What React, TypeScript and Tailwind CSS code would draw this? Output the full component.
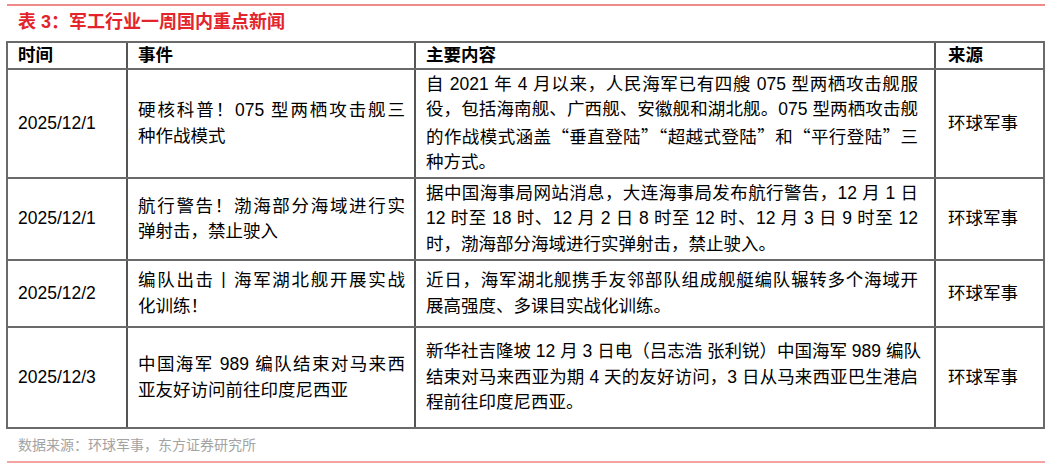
import React from "react";

const FONT = '"Liberation Sans", "Noto Sans CJK SC", sans-serif';
const CJK = '"Noto Sans CJK SC", sans-serif';

function Q({ children }: { children: React.ReactNode }) {
  return <span style={{ fontFamily: CJK }}>{children}</span>;
}

function Lines({ lines }: { lines: React.ReactNode[] }) {
  return (
    <div className="flex flex-col">
      {lines.map((l, i) => (
        <div
          key={i}
          className={
            i < lines.length - 1
              ? "whitespace-nowrap text-justify [text-align-last:justify]"
              : "whitespace-nowrap"
          }
        >
          {l}
        </div>
      ))}
    </div>
  );
}

type Row = {
  h: string;
  date: string;
  event: React.ReactNode[];
  content: React.ReactNode[];
  src: string;
};

const rows: Row[] = [
  {
    h: "h-[109px]",
    date: "2025/12/1",
    event: ["硬核科普！075 型两栖攻击舰三", "种作战模式"],
    content: [
      "自 2021 年 4 月以来，人民海军已有四艘 075 型两栖攻击舰服",
      "役，包括海南舰、广西舰、安徽舰和湖北舰。075 型两栖攻击舰",
      <>
        的作战模式涵盖<Q>“</Q>垂直登陆<Q>”“</Q>超越式登陆<Q>”</Q>和<Q>“</Q>平行登陆<Q>”</Q>三
      </>,
      "种方式。",
    ],
    src: "环球军事",
  },
  {
    h: "h-[82px]",
    date: "2025/12/1",
    event: ["航行警告！渤海部分海域进行实", "弹射击，禁止驶入"],
    content: [
      "据中国海事局网站消息，大连海事局发布航行警告，12 月 1 日",
      "12 时至 18 时、12 月 2 日 8 时至 12 时、12 月 3 日 9 时至 12",
      "时，渤海部分海域进行实弹射击，禁止驶入。",
    ],
    src: "环球军事",
  },
  {
    h: "h-[67px]",
    date: "2025/12/2",
    event: ["编队出击丨海军湖北舰开展实战", "化训练！"],
    content: [
      "近日，海军湖北舰携手友邻部队组成舰艇编队辗转多个海域开",
      "展高强度、多课目实战化训练。",
    ],
    src: "环球军事",
  },
  {
    h: "h-[99px]",
    date: "2025/12/3",
    event: ["中国海军 989 编队结束对马来西", "亚友好访问前往印度尼西亚"],
    content: [
      "新华社吉隆坡 12 月 3 日电（吕志浩 张利锐）中国海军 989 编队",
      "结束对马来西亚为期 4 天的友好访问，3 日从马来西亚巴生港启",
      "程前往印度尼西亚。",
    ],
    src: "环球军事",
  },
];

export default function App() {
  return (
    <div
      className="w-[1051px] h-[468px] bg-white text-black overflow-hidden pt-[4px]"
      style={{ fontFamily: FONT }}
    >
      <div className="ml-[7px] w-[1038px] h-[2px] bg-[#f08a8a]" />
      <div className="h-[35px] flex items-center pb-[4px] pl-[18px] text-[18px] font-bold text-[#e3242b] leading-none">
        表 3：军工行业一周国内重点新闻
      </div>

      <div className="ml-[6px] w-[1039px] border-2 border-[#6a6a6a] text-[17.5px] leading-[25.5px]">
        {/* header */}
        <div className="flex h-[27px] border-b-2 border-[#6a6a6a] font-bold">
          <div className="w-[120px] border-r-2 border-[#555] pl-[10px] flex items-center">时间</div>
          <div className="w-[288px] border-r-2 border-[#555] pl-[10px] flex items-center">事件</div>
          <div className="w-[520px] border-r-2 border-[#555] pl-[10px] flex items-center">主要内容</div>
          <div className="flex-1 pl-[12px] flex items-center">来源</div>
        </div>
        {rows.map((r, i) => (
          <div
            key={i}
            className={`flex ${r.h} ${i < rows.length - 1 ? "border-b-2 border-[#6a6a6a]" : ""}`}
          >
            <div className="w-[120px] border-r-2 border-[#555] pl-[10px] flex items-center">
              {r.date}
            </div>
            <div className="w-[288px] border-r-2 border-[#555] pl-[10px] pr-[9px] flex items-center">
              <div className="w-[267px]">
                <Lines lines={r.event} />
              </div>
            </div>
            <div className="w-[520px] border-r-2 border-[#555] pl-[10px] flex items-center">
              <div className="w-[492px]">
                <Lines lines={r.content} />
              </div>
            </div>
            <div className="flex-1 pl-[12px] flex items-center">{r.src}</div>
          </div>
        ))}
      </div>

      <div className="h-[32px] flex items-center pl-[18px] text-[14px] text-[#a3a3a3]">
        数据来源：环球军事，东方证券研究所
      </div>
      <div className="ml-[7px] w-[1038px] h-[2px] bg-[#f5a3a3]" />
    </div>
  );
}
